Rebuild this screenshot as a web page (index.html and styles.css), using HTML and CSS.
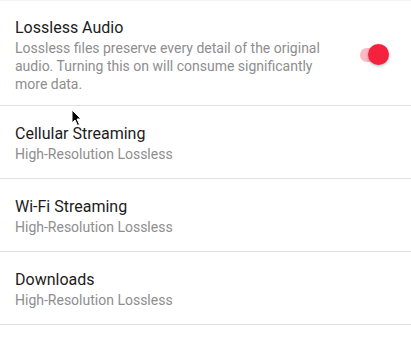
FILE: index.html
```html
<!DOCTYPE html>
<html>
<head>
<meta charset="utf-8">
<link rel="stylesheet" href="styles.css">
</head>
<body>
<div class="list">
  <div class="row row-first">
    <div class="text">
      <div class="title">Lossless Audio</div>
      <div class="sub">Lossless files preserve every detail of the original audio. Turning this on will consume significantly more data.</div>
    </div>
    <div class="toggle"><span class="track"></span><span class="thumb"></span></div>
  </div>
  <div class="row">
    <div class="text">
      <div class="title">Cellular Streaming</div>
      <div class="sub">High-Resolution Lossless</div>
    </div>
  </div>
  <div class="row">
    <div class="text">
      <div class="title">Wi-Fi Streaming</div>
      <div class="sub">High-Resolution Lossless</div>
    </div>
  </div>
  <div class="row">
    <div class="text">
      <div class="title">Downloads</div>
      <div class="sub">High-Resolution Lossless</div>
    </div>
  </div>
</div>
<svg class="cursor" width="12" height="18" viewBox="0 0 12 18"><path d="M1 1 L1 14 L4 11 L6.5 16.5 L8.5 15.5 L6 10 L10 10 Z" fill="#000" stroke="#fff" stroke-width="1"/></svg>
</body>
</html>
```

FILE: styles.css
```css
html, body {
  margin: 0;
  padding: 0;
  background: #fff;
}
body {
  font-family: Roboto, "Noto Sans", sans-serif;
  width: 411px;
  height: 345px;
  overflow: hidden;
  position: relative;
  border-top: 1px solid #f4f4f4;
  box-sizing: border-box;
}
.list {
  display: flex;
  flex-direction: column;
}
.row {
  display: flex;
  align-items: center;
  padding: 17px 15px 15px 15px;
  border-bottom: 1px solid #e2e2e2;
}
.row-first {
  padding: 16px 15px 12px 15px;
}
.text {
  flex: 1;
  display: flex;
  flex-direction: column;
}
.row-first .text {
  padding-right: 38px;
}
.title {
  font-size: 16px;
  line-height: 22px;
  color: #1c1c1c;
}
.sub {
  font-size: 14px;
  line-height: 18px;
  color: #8e8e8e;
}
.toggle {
  position: relative;
  width: 30px;
  height: 22px;
  margin-right: 6px;
  flex: none;
}
.track {
  position: absolute;
  left: 0;
  top: 4px;
  width: 28px;
  height: 14px;
  border-radius: 7px;
  background: #fcb8c3;
}
.thumb {
  position: absolute;
  left: 8px;
  top: 0;
  width: 21px;
  height: 21px;
  border-radius: 50%;
  background: #f4223f;
  box-shadow: 0 1px 3px rgba(0,0,0,0.3);
}
.cursor {
  position: absolute;
  left: 71px;
  top: 108px;
}
```
